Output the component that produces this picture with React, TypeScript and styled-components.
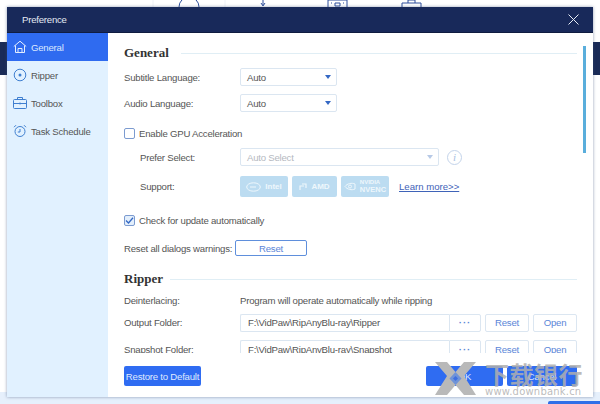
import { createGlobalStyle, styled } from "styled-components";

const GlobalStyle = createGlobalStyle`
    html, body { margin: 0; padding: 0; }
    body { font-family: "Liberation Sans", Arial, sans-serif; font-size: 9.6px; letter-spacing: -0.22px; color: #555; white-space: nowrap; }
    * { box-sizing: border-box; }
`;

const Page = styled.div`
    position: relative;
    width: 600px;
    height: 404px;
    padding: 7px;
    overflow: hidden;
    background: linear-gradient(#fff 0, #fff 392px, #e6f0fc 392px);
`;

const BackBar = styled.div<{ $side: "left" | "right" }>`
    position: absolute;
    top: 42px;
    ${(p) => p.$side}: 0;
    width: 8px;
    height: 33px;
    background: #1a2b57;
`;

const BackIcons = styled.svg`
    position: absolute;
    left: 140px;
    top: 0;
`;

const BackButton = styled.div`
    position: absolute;
    left: 548px;
    top: 401px;
    width: 60px;
    height: 6px;
    border-radius: 2px;
    background: #2f6fe8;
`;

const Dialog = styled.div`
    position: relative;
    width: 586px;
    height: 390px;
    display: flex;
    flex-direction: column;
    background: #fff;
    box-shadow: 0 0 3px rgba(60, 80, 120, 0.55);
`;

const TitleBar = styled.div`
    flex: none;
    height: 26px;
    padding: 0 14px 0 15px;
    display: flex;
    align-items: center;
    justify-content: space-between;
    background: #18295a;
    border-bottom: 1px solid #0f1c40;
    color: #e4e9f3;
`;

const Body = styled.div`
    flex: 1;
    display: flex;
    min-height: 0;
`;

const Sidebar = styled.nav`
    flex: none;
    width: 101px;
    background: #e1f1ff;
`;

const NavItem = styled.div<{ $active?: boolean }>`
    height: 28px;
    padding-left: 6px;
    display: flex;
    align-items: center;
    gap: 4px;
    background: ${(p) => (p.$active ? "#2f6bf0" : "transparent")};
    color: ${(p) => (p.$active ? "#dbe8ff" : "#555")};
    svg { flex: none; color: ${(p) => (p.$active ? "#e4eeff" : "#3f7fd0")}; }
`;

const Main = styled.div`
    position: relative;
    flex: 1;
    display: flex;
    flex-direction: column;
    min-width: 0;
`;

const Scroll = styled.div`
    height: 320px;
    padding: 12px 16px 0;
    overflow: hidden;
`;

const Heading = styled.div<{ $top?: number; $gap: number }>`
    height: 16px;
    margin-top: ${(p) => p.$top ?? 0}px;
    display: flex;
    align-items: center;
    gap: ${(p) => p.$gap}px;
    font-family: "Liberation Serif", serif;
    font-size: 13px;
    font-weight: 700;
    letter-spacing: 0;
    color: #333;
    &::after {
        content: "";
        flex: 1;
        height: 1px;
        background: #e0eef5;
    }
`;

const Row = styled.div<{ $top: number; $h?: number; $indent?: boolean }>`
    height: ${(p) => p.$h ?? 18}px;
    margin-top: ${(p) => p.$top}px;
    padding-left: ${(p) => (p.$indent ? 16 : 0)}px;
    display: flex;
    align-items: center;
`;

const Label = styled.div<{ $width?: number; $indent?: boolean }>`
    flex: none;
    width: ${(p) => p.$width ?? (p.$indent ? 100 : 116)}px;
`;

const Select = styled.div<{ $width: number; $disabled?: boolean }>`
    width: ${(p) => p.$width}px;
    height: 18px;
    padding: 0 5px 0 6px;
    display: flex;
    align-items: center;
    justify-content: space-between;
    border: 1px solid #dbe6f1;
    border-radius: 2px;
    color: ${(p) => (p.$disabled ? "#b5b9bf" : "#555")};
    &::after {
        content: "";
        border-style: solid;
        border-width: 4px 3.5px 0;
        border-color: ${(p) => (p.$disabled ? "#b7c9e6" : "#3468c4")} transparent transparent;
    }
`;

const InfoIcon = styled.div`
    margin-left: 8px;
    width: 15px;
    height: 15px;
    display: flex;
    align-items: center;
    justify-content: center;
    border: 1px solid #c3d3ea;
    border-radius: 50%;
    font-family: "Liberation Serif", serif;
    font-style: italic;
    font-size: 11px;
    color: #a9c0e2;
`;

const Check = styled.div<{ $checked?: boolean }>`
    flex: none;
    width: 11px;
    height: 11px;
    margin-right: 4px;
    display: flex;
    align-items: center;
    justify-content: center;
    border: 1px solid #7c9bd0;
    border-radius: 2px;
    background: ${(p) => (p.$checked ? "#e3effc" : "#fff")};
    color: #3468c4;
`;

const Chip = styled.div<{ $width: number }>`
    width: ${(p) => p.$width}px;
    height: 21px;
    margin-right: 4px;
    display: flex;
    align-items: center;
    justify-content: center;
    gap: 4px;
    border-radius: 2px;
    background: #bcdcf1;
    color: #eef7fc;
    font-size: 8px;
    font-weight: 700;
    letter-spacing: 0;
`;

const ChipStack = styled.div`
    font-size: 6px;
    line-height: 7px;
    font-weight: 700;
    strong { font-size: 7.5px; font-weight: 700; }
`;

const LearnMore = styled.a`
    margin-left: 6px;
    letter-spacing: 0;
    color: #3f63b8;
    text-decoration: underline;
`;

const OutlineButton = styled.div<{ $width: number; $strong?: boolean; $left?: number }>`
    flex: none;
    width: ${(p) => p.$width}px;
    height: ${(p) => (p.$strong ? 16 : 18)}px;
    margin-left: ${(p) => p.$left ?? 4}px;
    display: flex;
    align-items: center;
    justify-content: center;
    border: 1px solid ${(p) => (p.$strong ? "#5f8fdc" : "#dbe6f1")};
    border-radius: 2px;
    color: #5b86d8;
`;

const PathBox = styled.div`
    width: 209px;
    height: 18px;
    padding-left: 7px;
    display: flex;
    align-items: center;
    border: 1px solid #dbe6f1;
    border-right: none;
    border-radius: 2px 0 0 2px;
`;

const BrowseButton = styled(OutlineButton)`
    margin-left: 0;
    border-radius: 0 2px 2px 0;
    font-weight: 700;
    letter-spacing: 1px;
`;

const Footer = styled.div`
    flex: 1;
    padding: 13px 16px 0;
    display: flex;
    align-items: flex-start;
`;

const FilledButton = styled.div<{ $width: number; $left?: number }>`
    width: ${(p) => p.$width}px;
    height: 20px;
    margin-left: ${(p) => p.$left ?? 0}px;
    display: flex;
    align-items: center;
    justify-content: center;
    border-radius: 2px;
    background: #2f6cf2;
    color: #dfe9ff;
`;

const ScrollThumb = styled.div`
    position: absolute;
    right: 7px;
    top: 13px;
    width: 3.5px;
    height: 107px;
    background: #5aaedc;
`;

const Watermark = styled.div`
    position: absolute;
    left: 435px;
    top: 362px;
    display: flex;
    gap: 9px;
    pointer-events: none;
`;

const WatermarkText = styled.div`
    width: 98px;
    display: flex;
    flex-direction: column;
    color: rgba(175, 175, 175, 0.85);
`;

const WatermarkTitle = styled.div`
    font-family: "Noto Sans CJK SC", sans-serif;
    font-size: 24px;
    line-height: 23px;
    font-weight: 700;
    letter-spacing: 0.5px;
`;

const WatermarkUrl = styled.div`
    margin-top: 1px;
    font-family: "DejaVu Sans", sans-serif;
    font-size: 10px;
    line-height: 11px;
    letter-spacing: 0.2px;
`;

function HomeIcon() {
    return (
        <svg width="14" height="14" viewBox="0 0 14 14" fill="none" stroke="currentColor" strokeWidth="1">
            <path d="M.8 6.500 7 1.200l6.200 5.300M2.500 5.500v7h9v-7M5 12.500V8.500h4v4" />
        </svg>
    );
}

function DiscIcon() {
    return (
        <svg width="14" height="14" viewBox="0 0 14 14" fill="none" stroke="currentColor" strokeWidth="1">
            <circle cx="7" cy="7" r="5.800" />
            <circle cx="7" cy="7" r="1.500" fill="currentColor" stroke="none" />
        </svg>
    );
}

function ToolboxIcon() {
    return (
        <svg width="14" height="14" viewBox="0 0 14 14" fill="none" stroke="currentColor" strokeWidth="1">
            <rect x="0.500" y="3.500" width="13" height="9" rx="1" />
            <path d="M4.500 3.500v-2h5v2M0.500 7.500h13M7 6.500v2" />
        </svg>
    );
}

function ClockIcon() {
    return (
        <svg width="14" height="14" viewBox="0 0 14 14" fill="none" stroke="currentColor" strokeWidth="1">
            <circle cx="7" cy="7.500" r="5" />
            <path d="M7 5v3H4.800M1 3.200 3 1.200M13 3.200l-2-2" />
        </svg>
    );
}

function CloseIcon() {
    return (
        <svg width="11" height="11" viewBox="0 0 11 11" stroke="#e8edf6" strokeWidth="1">
            <path d="M.5.5l10 10M10.500.5l-10 10" />
        </svg>
    );
}

function TickIcon() {
    return (
        <svg width="9" height="9" viewBox="0 0 9 9" fill="none" stroke="currentColor" strokeWidth="1.300">
            <path d="M1 4.500 3.500 7 8 1.800" />
        </svg>
    );
}

function WatermarkLogo() {
    return (
        <svg width="41" height="33" viewBox="0 0 41 33">
            <path d="M0 0h12l8.500 10L29 0h12L29 14l12 19H29l-8.500-10L12 33H0l12-19z" fill="#b9b9b9" />
            <path d="M20.500 10l6 6.500-6 6.500-6-6.500z" fill="#6f93d8" />
            <path d="M20.500 14l2.500 2.500-2.500 2.500-2.500-2.500z" fill="#3f6fe0" />
        </svg>
    );
}

export default function App() {
    return (
        <Page>
            <GlobalStyle />
            <BackIcons width="300" height="8" viewBox="0 0 300 8" fill="none" stroke="#2f4f9c" strokeWidth="1">
                <path d="M13 0v8M85 0v8" stroke="#eef1f6" />
                <path d="M39 7a10 10 0 0 1 20 0" />
                <path d="M123 0v5M121 3l2 3 2-3" />
                <path d="M188 0h19v7M188 0v7M191 3h1M195 3h5v3h-5zM203 3h1" />
                <path d="M262 3h19v5M262 3v5M268 3V0h7v3" />
            </BackIcons>
            <BackBar $side="left" />
            <BackBar $side="right" />
            <BackButton />
            <Dialog>
                <TitleBar>
                    Preference
                    <CloseIcon />
                </TitleBar>
                <Body>
                    <Sidebar>
                        <NavItem $active><HomeIcon />General</NavItem>
                        <NavItem><DiscIcon />Ripper</NavItem>
                        <NavItem><ToolboxIcon />Toolbox</NavItem>
                        <NavItem><ClockIcon />Task Schedule</NavItem>
                    </Sidebar>
                    <Main>
                        <Scroll>
                            <Heading $gap={12}>General</Heading>
                            <Row $top={7}><Label>Subtitle Language:</Label><Select $width={97}>Auto</Select></Row>
                            <Row $top={8}><Label>Audio Language:</Label><Select $width={97}>Auto</Select></Row>
                            <Row $top={12}><Check />Enable GPU Acceleration</Row>
                            <Row $top={6} $indent>
                                <Label $indent>Prefer Select:</Label>
                                <Select $width={199} $disabled>Auto Select</Select>
                                <InfoIcon>i</InfoIcon>
                            </Row>
                            <Row $top={10} $h={21} $indent>
                                <Label $indent>Support:</Label>
                                <Chip $width={48}>
                                    <svg width="15" height="10" viewBox="0 0 15 10" fill="none" stroke="#eef7fc">
                                        <ellipse cx="7.500" cy="5" rx="6.800" ry="4.200" />
                                        <path d="M4 5h6" />
                                    </svg>
                                    Intel
                                </Chip>
                                <Chip $width={45}>
                                    <svg width="8" height="8" viewBox="0 0 8 8" fill="none" stroke="#eef7fc" strokeWidth="1.200">
                                        <path d="M1 7V3h4M3 1h4v4" />
                                    </svg>
                                    AMD
                                </Chip>
                                <Chip $width={48}>
                                    <svg width="12" height="9" viewBox="0 0 12 9" fill="none" stroke="#eef7fc">
                                        <path d="M1 4.500C3 1.500 8 .5 11 2v5C8 8.500 3 7.500 1 4.500z" />
                                        <circle cx="6" cy="4.500" r="1.500" />
                                    </svg>
                                    <ChipStack>NVIDIA<br /><strong>NVENC</strong></ChipStack>
                                </Chip>
                                <LearnMore>Learn more&gt;&gt;</LearnMore>
                            </Row>
                            <Row $top={14}><Check $checked><TickIcon /></Check>Check for update automatically</Row>
                            <Row $top={11} $h={16}>
                                <Label $width={111}>Reset all dialogs warnings:</Label>
                                <OutlineButton $width={72} $strong $left={0}>Reset</OutlineButton>
                            </Row>
                            <Heading $top={15} $gap={7}>Ripper</Heading>
                            <Row $top={4}><Label>Deinterlacing:</Label>Program will operate automatically while ripping</Row>
                            <Row $top={4.500}>
                                <Label>Output Folder:</Label>
                                <PathBox>F:\VidPaw\RipAnyBlu-ray\Ripper</PathBox>
                                <BrowseButton $width={32}>···</BrowseButton>
                                <OutlineButton $width={44}>Reset</OutlineButton>
                                <OutlineButton $width={44}>Open</OutlineButton>
                            </Row>
                            <Row $top={8.500}>
                                <Label>Snapshot Folder:</Label>
                                <PathBox>F:\VidPaw\RipAnyBlu-ray\Snapshot</PathBox>
                                <BrowseButton $width={32}>···</BrowseButton>
                                <OutlineButton $width={44}>Reset</OutlineButton>
                                <OutlineButton $width={44}>Open</OutlineButton>
                            </Row>
                        </Scroll>
                        <Footer>
                            <FilledButton $width={77}>Restore to Default</FilledButton>
                            <FilledButton $width={77} $left={225}>OK</FilledButton>
                            <FilledButton $width={70} $left={4}>Cancel</FilledButton>
                        </Footer>
                        <ScrollThumb />
                    </Main>
                </Body>
            </Dialog>
            <Watermark>
                <WatermarkLogo />
                <WatermarkText>
                    <WatermarkTitle>下载银行</WatermarkTitle>
                    <WatermarkUrl>www.downbank.cn</WatermarkUrl>
                </WatermarkText>
            </Watermark>
        </Page>
    );
}
